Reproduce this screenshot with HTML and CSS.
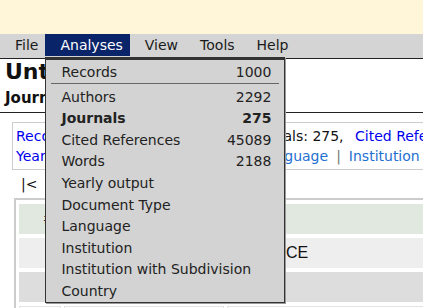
FILE: index.html
```html
<!DOCTYPE html>
<html lang="en">
<head>
    <meta charset="UTF-8">
    <title>Untitled - Journals</title>
    <link rel="stylesheet" href="styles.css">
</head>
<body>
    <div class="topbar"></div>

    <div class="menubar">
        <span class="menu-item">File</span>
        <span class="menu-item active">Analyses
            <div class="dropdown">
                <div class="drop-item"><span>Records</span><span>1000</span></div>
                <div class="drop-sep"></div>
                <div class="drop-item"><span>Authors</span><span>2292</span></div>
                <div class="drop-item current"><span>Journals</span><span>275</span></div>
                <div class="drop-item"><span>Cited References</span><span>45089</span></div>
                <div class="drop-item"><span>Words</span><span>2188</span></div>
                <div class="drop-item"><span>Yearly output</span></div>
                <div class="drop-item"><span>Document Type</span></div>
                <div class="drop-item"><span>Language</span></div>
                <div class="drop-item"><span>Institution</span></div>
                <div class="drop-item"><span>Institution with Subdivision</span></div>
                <div class="drop-item"><span>Country</span></div>
            </div>
        </span>
        <span class="menu-item">View</span>
        <span class="menu-item">Tools</span>
        <span class="menu-item">Help</span>
    </div>

    <div class="header">
        <h1>Untitled</h1>
        <h2>Journals</h2>
    </div>

    <div class="summary">
        <div>
            <a href="#" class="link">Records</a>: 1000,<span class="sp"></span>
            <a href="#" class="link">Authors</a>: 2292,<span class="sp"></span>
            Journals: 275,<span class="sp"></span>
            <a href="#" class="link">Cited References</a>: 45089
        </div>
        <div>
            <a href="#" class="link">Yearly output</a><span class="bar">|</span><a href="#" class="link">Document Type</a><span class="bar">|</span><a href="#" class="link alt">Language</a><span class="bar">|</span><a href="#" class="link alt">Institution</a>
        </div>
    </div>

    <div class="pager">|&lt; &nbsp;&lt;&lt; &nbsp;1 - 20 &nbsp;&gt;&gt; &nbsp;&gt;|</div>

    <table class="grid">
        <colgroup>
            <col class="c-num">
            <col class="c-count">
            <col class="c-title">
        </colgroup>
        <tr class="head">
            <td class="num">#</td>
            <td class="count">Recs</td>
            <td class="title">Title</td>
        </tr>
        <tr class="odd">
            <td></td>
            <td class="count">42</td>
            <td class="title">SCIENCE</td>
        </tr>
        <tr class="even">
            <td></td>
            <td class="count">37</td>
            <td class="title"></td>
        </tr>
        <tr class="last">
            <td></td>
            <td></td>
            <td></td>
        </tr>
    </table>
</body>
</html>
```

FILE: styles.css
```css
body {
    margin: 0;
    font-family: "DejaVu Sans", Verdana, sans-serif;
    font-size: 14px;
    color: #111;
    background: #fff;
    overflow: hidden;
}
.topbar {
    height: 34px;
    background: #fff5d9;
}
.menubar {
    display: flex;
    height: 24px;
    background: #d4d4d4;
}
.menu-item {
    position: relative;
    height: 22px;
    line-height: 23px;
    padding: 0 7px 0 15px;
    color: #1a1a1a;
}
.menu-item.active {
    background: #0a246a;
    color: #fff;
}
.dropdown {
    position: absolute;
    left: 0;
    top: 23px;
    width: 240px;
    box-sizing: border-box;
    padding-top: 1px;
    background: #d3d3d3;
    border: 1px solid #333;
    border-top: 3px solid #333;
    box-shadow: 1px 1px 0 #999;
    color: #222;
    z-index: 10;
}
.drop-item {
    display: flex;
    justify-content: space-between;
    height: 21.6px;
    line-height: 22.6px;
    padding: 0 13px 0 15px;
    white-space: nowrap;
}
.drop-item.current {
    font-weight: bold;
}
.drop-sep {
    height: 1px;
    margin: 0 5px 2px;
    background: #666;
}
.header {
    border-top: 1px solid #222;
    border-bottom: 1px solid #222;
    padding: 0 0 5px 5px;
}
.header h1 {
    margin: 0;
    font-size: 22px;
    line-height: 26px;
}
.header h2 {
    margin: 4px 0 0;
    font-size: 15px;
    line-height: 18px;
}
.summary {
    margin: 9px 0 0 12px;
    padding: 3px 4px 3px 3px;
    border: 1px solid #ccc;
    border-right: none;
    line-height: 20px;
    white-space: nowrap;
}
.sp {
    margin-right: 7px;
}
.link {
    color: #0000ee;
    text-decoration: none;
}
.link.alt {
    color: #1f6fd1;
}
.bar {
    color: #777;
    margin: 0 8px;
}
.pager {
    padding: 4px 0 0 21px;
    line-height: 20px;
    height: 24px;
    white-space: nowrap;
}
.grid {
    table-layout: fixed;
    width: 468px;
    margin-left: 14px;
    border: 2px solid #ccc;
    border-spacing: 3px 4px;
    font-family: "Liberation Sans", Arial, sans-serif;
    font-size: 16px;
}
.c-num {
    width: 42px;
}
.c-count {
    width: 160px;
}
.grid td {
    height: 30px;
    padding: 0;
    white-space: nowrap;
    overflow: hidden;
}
.grid .num {
    text-align: right;
    padding-right: 8px;
}
.grid .count {
    text-align: center;
}
.grid .title {
    padding-left: 10px;
}
.head td {
    background: #e0e8e0;
}
.odd td {
    background: #eeeeee;
}
.even td {
    background: #dddddd;
}
.last td {
    background: #fff;
    border: 1px solid #e4e4e4;
}
```
